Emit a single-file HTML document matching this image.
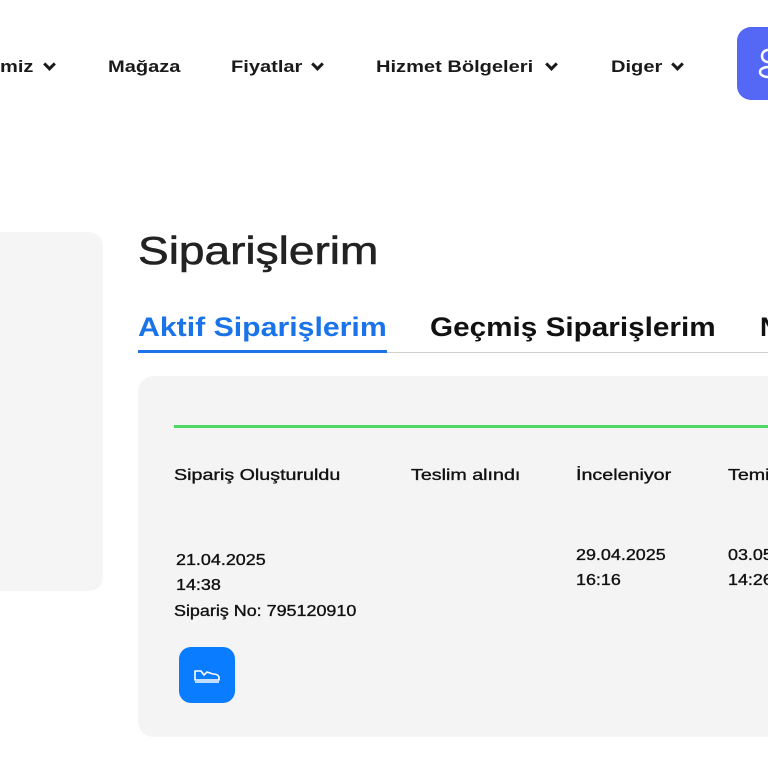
<!DOCTYPE html>
<html><head><meta charset="utf-8"><style>
*{margin:0;padding:0;box-sizing:border-box}
html,body{width:768px;height:768px;overflow:hidden}
body{background:#fff;position:relative;font-family:"Liberation Sans",sans-serif;color:#1a1a1a}
#w{position:absolute;left:0;top:0;width:768px;height:768px;overflow:hidden}
.a{position:absolute;white-space:nowrap;transform-origin:0 50%}
.nav{top:57px;font-size:17px;font-weight:700;transform:scaleX(1.18)}
.chev{position:absolute;top:60px;width:9px;height:9px;border-right:3px solid #1a1a1a;border-bottom:3px solid #1a1a1a;transform:rotate(45deg)}
.lbl{font-size:16px;font-weight:400;top:467px;color:#111;-webkit-text-stroke:0.35px #111;transform:scaleX(1.23)}
.d{font-size:16px;font-weight:400;line-height:25px;color:#111;-webkit-text-stroke:0.35px #111;transform:scaleX(1.12)}
</style></head><body><div id="w">
<div class="a nav" style="left:0">miz</div><span class="chev" style="left:45px"></span>
<div class="a nav" style="left:108px">Mağaza</div>
<div class="a nav" style="left:231px">Fiyatlar</div><span class="chev" style="left:313px"></span>
<div class="a nav" style="left:376px">Hizmet Bölgeleri</div><span class="chev" style="left:547px"></span>
<div class="a nav" style="left:611px">Diger</div><span class="chev" style="left:673px"></span>
<div class="a" style="left:737px;top:27px;width:60px;height:73px;background:#5468f5;border-radius:14px"></div>
<svg class="a" style="left:756px;top:48px" width="12" height="32" viewBox="0 0 12 32"><circle cx="12" cy="8" r="6" fill="none" stroke="#fff" stroke-width="2.5"/><ellipse cx="12" cy="24" rx="8" ry="5" fill="none" stroke="#fff" stroke-width="2.5"/></svg>

<div class="a" style="left:-20px;top:232px;width:123px;height:359px;background:#f5f5f5;border-radius:14px"></div>

<div class="a" style="left:138px;top:230px;font-size:39px;font-weight:400;color:#222;-webkit-text-stroke:0.6px #222;transform:scaleX(1.18)">Siparişlerim</div>
<div class="a" style="left:138px;top:312px;font-size:27px;font-weight:700;color:#1a73e8;transform:scaleX(1.12)">Aktif Siparişlerim</div>
<div class="a" style="left:430px;top:312px;font-size:27px;font-weight:700;color:#111;transform:scaleX(1.10)">Geçmiş Siparişlerim</div>
<div class="a" style="left:760px;top:312px;font-size:27px;font-weight:700;color:#111">N</div>
<div class="a" style="left:138px;top:352px;width:630px;height:1px;background:#d0d0d0"></div>
<div class="a" style="left:138px;top:350px;width:249px;height:3px;background:#1a73e8"></div>

<div class="a" style="left:138px;top:376px;width:660px;height:361px;background:#f4f4f4;border-radius:16px"></div>
<div class="a" style="left:174px;top:425px;width:594px;height:3px;background:#4cd964"></div>

<div class="a lbl" style="left:174px">Sipariş Oluşturuldu</div>
<div class="a lbl" style="left:411px">Teslim alındı</div>
<div class="a lbl" style="left:576px">İnceleniyor</div>
<div class="a lbl" style="left:728px">Temizleniyor</div>

<div class="a d" style="left:176px;top:548px">21.04.2025<br>14:38</div>
<div class="a d" style="left:174px;top:599px">Sipariş No: 795120910</div>
<div class="a d" style="left:576px;top:543px">29.04.2025<br>16:16</div>
<div class="a d" style="left:728px;top:543px">03.05.2025<br>14:26</div>

<div class="a" style="left:179px;top:647px;width:56px;height:56px;background:#0a7cff;border-radius:12px"></div>
<svg class="a" style="left:193px;top:667px" width="28" height="18" viewBox="0 0 28 18"><path d="M2 4 L2 13 L26 13 L26 10 Q25 7 20 7 L14 5 L11 8 L8 4 Z M2 15 L26 15" fill="none" stroke="#fff" stroke-width="1.6" stroke-linejoin="round"/></svg>
</div></body></html>
